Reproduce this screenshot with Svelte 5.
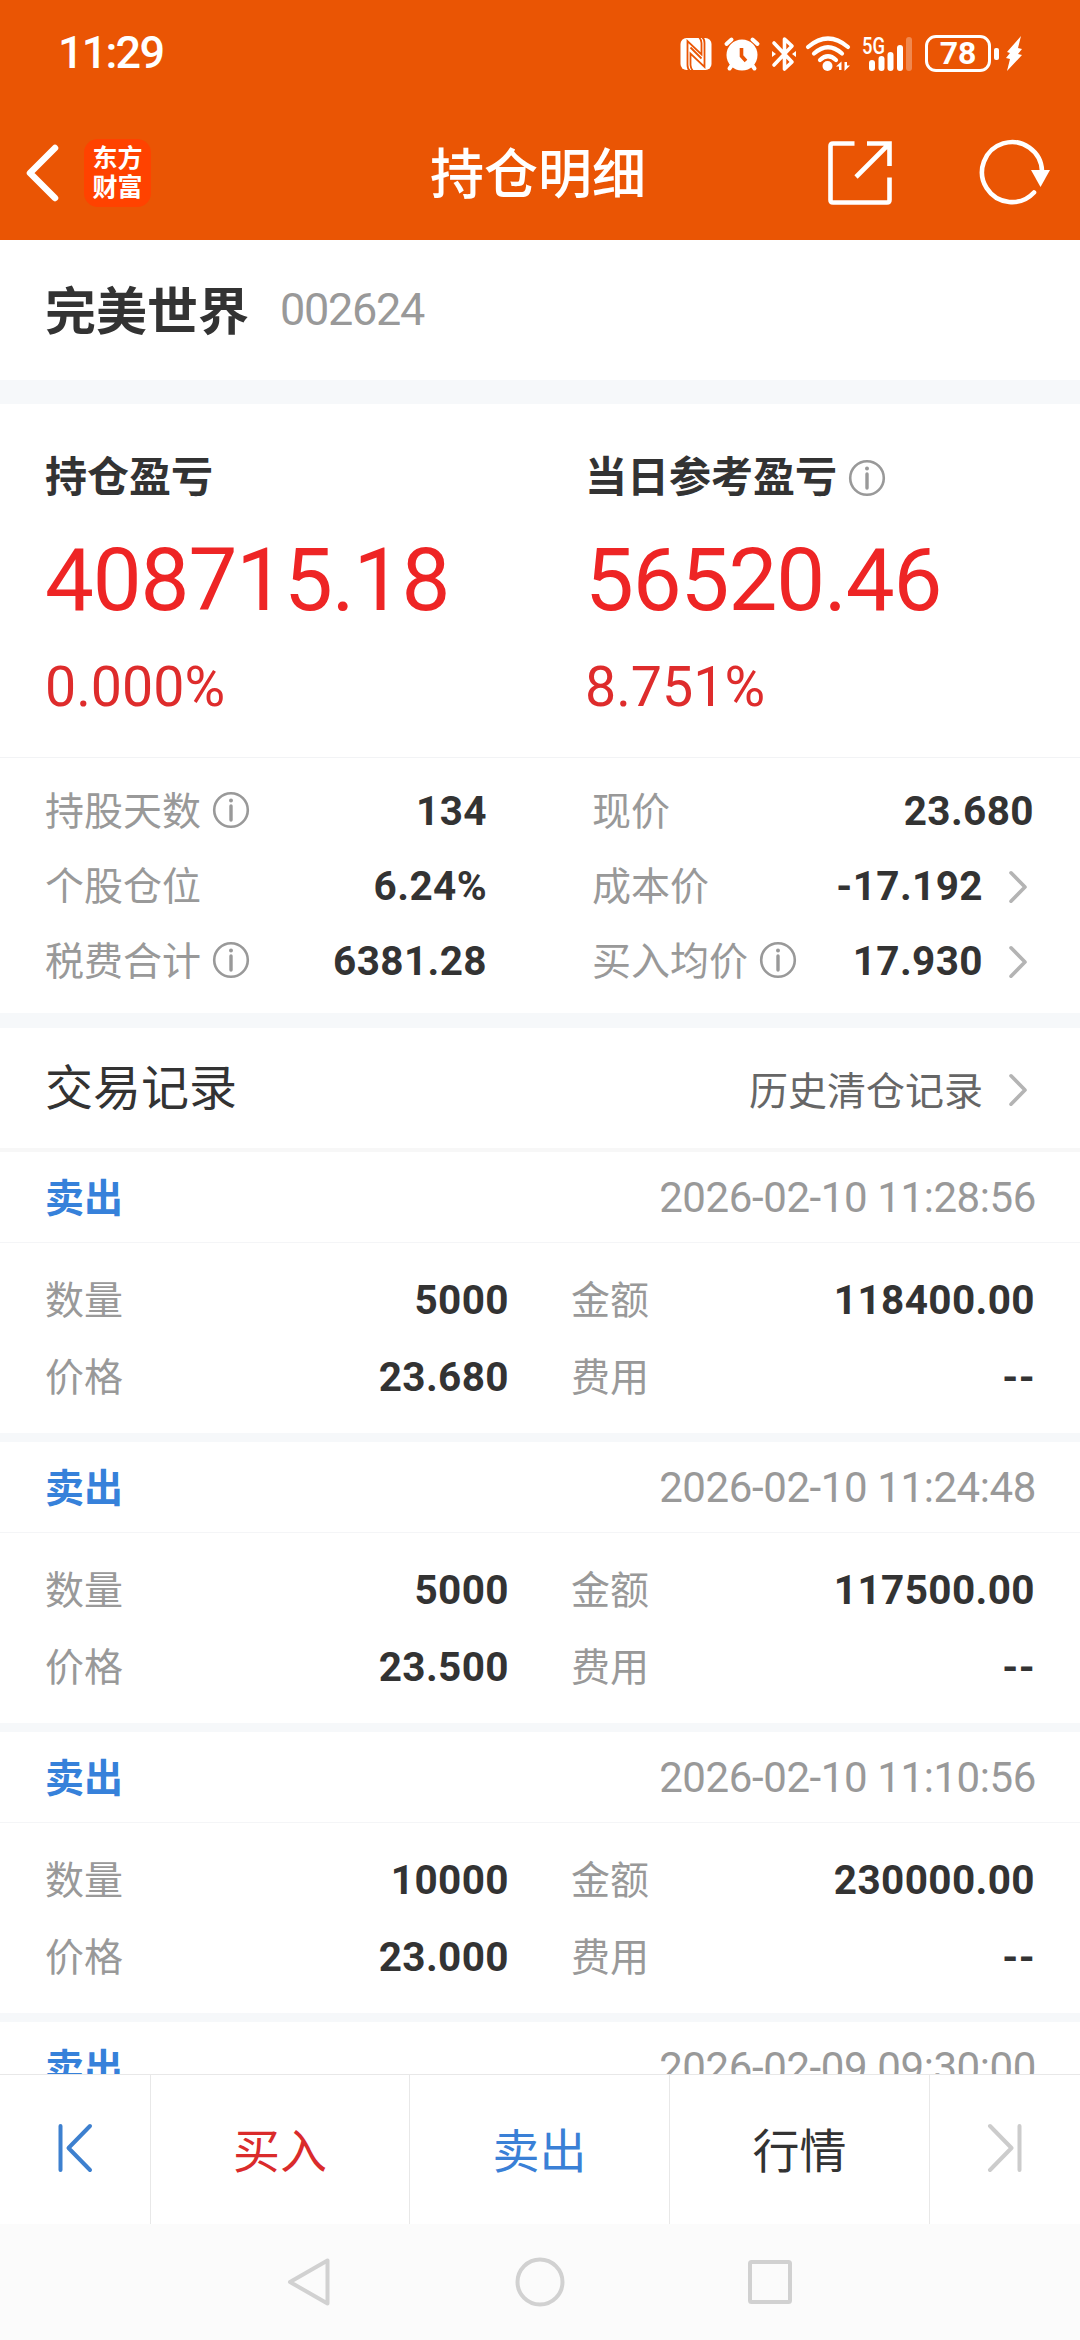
<!--
  Position detail screen
  Holding summary, trade records and the bottom trade bar
-->
<script lang="ts">
  interface Stat {
    label: string;
    value: string;
    info?: boolean;
    link?: boolean;
  }

  interface TradeRecord {
    time: string;
    details?: {
      quantity: string;
      amount: string;
      price: string;
      fee: string;
    };
  }

  const leftStats: Stat[] = [
    { label: '持股天数', value: '134', info: true },
    { label: '个股仓位', value: '6.24%' },
    { label: '税费合计', value: '6381.28', info: true },
  ];

  const rightStats: Stat[] = [
    { label: '现价', value: '23.680' },
    { label: '成本价', value: '-17.192', link: true },
    { label: '买入均价', value: '17.930', info: true, link: true },
  ];

  const records: TradeRecord[] = [
    {
      time: '2026-02-10 11:28:56',
      details: { quantity: '5000', amount: '118400.00', price: '23.680', fee: '--' },
    },
    {
      time: '2026-02-10 11:24:48',
      details: { quantity: '5000', amount: '117500.00', price: '23.500', fee: '--' },
    },
    {
      time: '2026-02-10 11:10:56',
      details: { quantity: '10000', amount: '230000.00', price: '23.000', fee: '--' },
    },
    { time: '2026-02-09 09:30:00' },
  ];
</script>

{#snippet infoIcon()}
  <svg class="info" width="38" height="38" viewBox="0 0 38 38" fill="none" stroke="#999" stroke-width="2.6">
    <circle cx="19" cy="19" r="16.8" />
    <path d="M19 15v14" stroke-width="3.4" stroke-linecap="round" />
    <circle cx="19" cy="9.6" r="2" fill="#999" stroke="none" />
  </svg>
{/snippet}

{#snippet chevron()}
  <svg class="chevron" width="20" height="34" viewBox="0 0 20 34" fill="none" stroke="#b4b4b4" stroke-width="3.6" stroke-linecap="round" stroke-linejoin="round">
    <path d="M3 2.8L17 17L3 31.2" />
  </svg>
{/snippet}

{#snippet statList(stats: Stat[])}
  {#each stats as stat}
    <div class="stat">
      <span class="label">{stat.label}</span>
      {#if stat.info}{@render infoIcon()}{/if}
      <span class="value">{stat.value}</span>
      {#if stat.link}{@render chevron()}{/if}
    </div>
  {/each}
{/snippet}

<div class="screen">
  <header>
    <div class="status-bar">
      <span class="clock">11:29</span>
      <div class="status-icons">
        <svg class="nfc" width="32" height="34" viewBox="0 0 32 34" fill="none" stroke="#ea5504" stroke-width="1.8">
          <rect x="0.5" y="1" width="31" height="32" rx="6" fill="#fff" stroke="none" />
          <path d="M10 34Q7.500 32 7.500 28V4L21.500 17.500V6Q21.500 3 19 0" />
          <path d="M22 0Q24.500 2 24.500 6V30L10.500 16.500V28Q10.500 31 13 34" />
          <path d="M10.500 10.500L21.500 21.500" />
        </svg>
        <svg class="alarm" width="36" height="35" viewBox="0 0 36 35" fill="none" stroke="#fff" stroke-width="4" stroke-linecap="round">
          <circle cx="18" cy="19" r="15.5" fill="#fff" stroke="none" />
          <path d="M2.500 8L7.500 3.500M33.500 8L28.500 3.500M8 29L5.500 32.500M28 29L30.500 32.500" />
          <path d="M17.500 12V20L22 25" stroke="#ea5504" stroke-width="3.6" stroke-linecap="butt" />
        </svg>
        <svg class="bluetooth" width="26" height="36" viewBox="0 0 26 36" fill="none" stroke="#fff" stroke-width="3.6" stroke-linecap="round" stroke-linejoin="round">
          <path d="M3 7L21 26L13.500 33V3L21 10L3 29" />
          <path d="M1 15L5 18L1 21ZM25 15L21 18L25 21Z" fill="#fff" stroke="none" />
        </svg>
        <svg class="wifi" width="46" height="36" viewBox="0 0 46 36" fill="none" stroke="#fff" stroke-width="4.2" stroke-linecap="round">
          <path d="M3 11Q23 -6 43 11M9 17.500Q23 5 37 17.500M15 24Q23 16.500 31 24" />
          <circle cx="22.500" cy="30" r="5" fill="#fff" stroke="none" />
          <path d="M31 30.500L36.500 25.500V34H34V30.500ZM45 29.500L39.500 35V26H42V29.500Z" fill="#fff" stroke="none" />
        </svg>
        <svg class="signal" width="52" height="36" viewBox="0 0 52 36" fill="#fff">
          <text x="0" y="18" class="network" textLength="23" lengthAdjust="spacingAndGlyphs">5G</text>
          <rect x="7" y="24" width="6" height="11" rx="3" />
          <rect x="16.500" y="20" width="6" height="15" rx="3" />
          <rect x="25.500" y="16" width="6" height="19" rx="3" />
          <rect x="35" y="9" width="6" height="26" rx="3" />
          <rect x="44" y="1" width="6" height="34" rx="3" opacity="0.3" />
        </svg>
        <div class="battery">78</div>
        <span class="battery-tip"></span>
        <svg class="bolt" width="18" height="38" viewBox="0 0 18 38" fill="#fff">
          <path d="M16 1L2 17L5 18L1 23L5 24L2 36L17 20L13 19L17 14L13 13Z" />
        </svg>
      </div>
    </div>

    <div class="title-bar">
      <div class="left">
        <svg width="36" height="60" viewBox="0 0 36 60" fill="none" stroke="#fff" stroke-width="6.500" stroke-linecap="round" stroke-linejoin="round">
          <path d="M31 5L6 30L31 55" />
        </svg>
        <div class="app-logo"><span>东方</span><span>财富</span></div>
      </div>
      <h1>持仓明细</h1>
      <div class="actions">
        <svg width="66" height="66" viewBox="0 0 66 66" fill="none" stroke="#fff" stroke-width="4.600">
          <path d="M27.500 3.500H6Q3.500 3.500 3.500 6V60Q3.500 62.500 6 62.500H60Q62.500 62.500 62.500 60V37.500" />
          <path d="M40 3.500H62.500V26M61.500 4.500L29 37" />
        </svg>
        <svg width="74" height="66" viewBox="0 0 74 66" fill="none" stroke="#fff" stroke-width="4.600" stroke-linecap="round">
          <path d="M64 31A30 30 0 1 0 56 52.500" />
          <path d="M53 30H72L62.500 47Z" fill="#fff" stroke="none" />
        </svg>
      </div>
    </div>
  </header>

  <section class="stock">
    <h2>完美世界</h2>
    <span class="code">002624</span>
  </section>

  <section class="profit">
    <div class="profit-item">
      <div class="caption">持仓盈亏</div>
      <div class="amount">408715.18</div>
      <div class="percent">0.000%</div>
    </div>
    <div class="profit-item">
      <div class="caption">当日参考盈亏{@render infoIcon()}</div>
      <div class="amount">56520.46</div>
      <div class="percent">8.751%</div>
    </div>
  </section>

  <section class="stats">
    <div class="stat-column">{@render statList(leftStats)}</div>
    <div class="stat-column">{@render statList(rightStats)}</div>
  </section>

  <section class="records-header">
    <h3>交易记录</h3>
    <div class="history">
      <span>历史清仓记录</span>
      {@render chevron()}
    </div>
  </section>

  <main>
    {#each records as record}
      <article>
        <div class="record-head">
          <span class="side">卖出</span>
          <span class="time">{record.time}</span>
        </div>
        {#if record.details}
          <div class="record-body">
            <span class="label">数量</span>
            <span class="value">{record.details.quantity}</span>
            <span class="label second">金额</span>
            <span class="value">{record.details.amount}</span>
            <span class="label">价格</span>
            <span class="value">{record.details.price}</span>
            <span class="label second">费用</span>
            <span class="value">{record.details.fee}</span>
          </div>
        {/if}
      </article>
    {/each}
  </main>

  <div class="trade-bar">
    <button aria-label="上一个">
      <svg width="36" height="50" viewBox="0 0 36 50" fill="none" stroke="#3d80cf" stroke-width="4" stroke-linecap="round" stroke-linejoin="round">
        <path d="M3.500 3V47M33 3L11.500 25L33 47" />
      </svg>
    </button>
    <button class="buy">买入</button>
    <button class="sell">卖出</button>
    <button>行情</button>
    <button aria-label="下一个">
      <svg width="36" height="50" viewBox="0 0 36 50" fill="none" stroke="#ccc" stroke-width="4" stroke-linecap="round" stroke-linejoin="round">
        <path d="M32.500 3V47M3 3L24.500 25L3 47" />
      </svg>
    </button>
  </div>

  <nav>
    <svg width="50" height="52" viewBox="0 0 50 52">
      <path d="M42.500 4.500V47.500L5 26Z" />
    </svg>
    <svg width="52" height="52" viewBox="0 0 52 52">
      <circle cx="26" cy="26" r="22.500" />
    </svg>
    <svg width="50" height="52" viewBox="0 0 50 52">
      <rect x="5" y="6" width="40" height="40" rx="1.500" />
    </svg>
  </nav>
</div>

<style>
  :global(body) {
    margin: 0;
    background: #fff;
  }

  .screen {
    display: flex;
    flex-direction: column;
    width: 1080px;
    height: 2340px;
    overflow: hidden;
    background: #fff;
    color: #333;
    font-family: Roboto, "Noto Sans CJK SC", sans-serif;
    line-height: 1.3;
  }

  svg {
    display: block;
    flex: none;
    overflow: visible;
  }

  h1,
  h2,
  h3 {
    margin: 0;
    font-weight: 400;
  }

  header {
    height: 240px;
    background: #ea5504;
    color: #fff;
  }

  .status-bar {
    display: flex;
    justify-content: space-between;
    align-items: center;
    height: 107px;
    padding: 0 57px 0 58px;
  }

  .clock {
    font-size: 45px;
    font-weight: 500;
    letter-spacing: -1.8px;
  }

  .status-icons {
    display: flex;
    align-items: center;
  }

  .alarm {
    margin-left: 12px;
  }

  .bluetooth {
    margin-left: 11px;
  }

  .wifi {
    margin-left: 8px;
  }

  .signal {
    margin-left: 11px;
  }

  .network {
    font-size: 24px;
    font-weight: 500;
  }

  .battery {
    box-sizing: border-box;
    width: 66px;
    height: 37px;
    margin-left: 11px;
    border: 3px solid #fff;
    border-radius: 11px;
    font-size: 32px;
    font-weight: 700;
    line-height: 31px;
    text-align: center;
  }

  .battery-tip {
    width: 5px;
    height: 12px;
    margin-left: 3px;
    border-radius: 2px;
    background: #fff;
  }

  .bolt {
    margin-left: 6px;
  }

  .title-bar {
    display: grid;
    grid-template-columns: 1fr auto 1fr;
    align-items: center;
    height: 131px;
    padding: 0 28px 0 24px;
  }

  .left {
    display: flex;
    align-items: center;
  }

  .app-logo {
    display: flex;
    flex-direction: column;
    justify-content: center;
    align-items: center;
    width: 67px;
    height: 68px;
    margin-left: 24px;
    border-radius: 14px;
    background: #ff4200;
    font-size: 25px;
    font-weight: 700;
    line-height: 29px;
  }

  h1 {
    padding-top: 7px;
    font-size: 54px;
    font-weight: 500;
    line-height: 66px;
  }

  .actions {
    display: flex;
    justify-content: flex-end;
    gap: 85px;
  }

  .stock {
    display: flex;
    align-items: center;
    height: 140px;
    padding-left: 45px;
    border-bottom: 24px solid #f6f8fa;
  }

  h2 {
    padding-top: 5px;
    font-size: 51px;
    font-weight: 700;
    line-height: 60px;
  }

  .code {
    margin-left: 31px;
    color: #999;
    font-size: 45px;
    letter-spacing: -1.3px;
  }

  .profit {
    display: grid;
    grid-template-columns: 540px 540px;
    height: 353px;
    border-bottom: 1px solid #f2f3f5;
  }

  .profit-item {
    padding: 49px 0 0 45px;
  }

  .caption {
    display: flex;
    align-items: center;
    height: 50px;
    font-size: 42px;
    font-weight: 700;
  }

  .info {
    margin-left: 11px;
  }

  .amount {
    margin-top: 27px;
    color: #ee2525;
    font-size: 87px;
    line-height: 100px;
    letter-spacing: -1.1px;
  }

  .percent {
    margin-top: 25px;
    color: #de2c2c;
    font-size: 55.5px;
    line-height: 66px;
  }

  .stats {
    display: grid;
    grid-template-columns: 442px 442px;
    column-gap: 105px;
    height: 239px;
    padding: 16px 0 0 45px;
    border-bottom: 15px solid #f6f8fa;
  }

  .stat {
    display: flex;
    align-items: center;
    height: 75px;
  }

  .stat .info {
    margin-bottom: 3px;
  }

  .label {
    padding-top: 1px;
    color: #999;
    font-size: 39px;
  }

  .value {
    margin-left: auto;
    font-size: 40.5px;
    font-weight: 700;
    letter-spacing: 0.4px;
  }

  .chevron {
    margin: 0 6px 0 25px;
  }

  .records-header {
    display: flex;
    justify-content: space-between;
    align-items: center;
    height: 120px;
    padding: 0 46px 0 45px;
    border-bottom: 4px solid #f7f7f7;
  }

  h3 {
    padding-top: 2px;
    font-size: 48px;
  }

  .history {
    display: flex;
    align-items: center;
    padding-top: 4px;
    color: #666;
    font-size: 39px;
  }

  .history span {
    padding-top: 4px;
  }

  main {
    flex: 1;
    min-height: 0;
    overflow: hidden;
  }

  article {
    height: 281px;
    border-bottom: 9px solid #f6f8fa;
  }

  .record-head {
    display: flex;
    justify-content: space-between;
    align-items: center;
    height: 90px;
    padding: 0 44px 0 45px;
    border-bottom: 1px solid #f4f5f7;
  }

  .side {
    padding-top: 4px;
    color: #3681da;
    font-size: 39px;
    font-weight: 700;
  }

  .time {
    padding-top: 2px;
    color: #999;
    font-size: 42px;
    letter-spacing: -0.4px;
  }

  .record-body {
    display: grid;
    grid-template-columns: 100px 364px 163px 363px;
    grid-auto-rows: 77px;
    align-items: center;
    padding: 19px 45px 0;
  }

  .record-body .value {
    text-align: right;
  }

  .second {
    padding-left: 62px;
  }

  .trade-bar {
    display: grid;
    grid-template-columns: 151px 259px 260px 260px 150px;
    height: 149px;
    border-top: 1px solid #e8e8e8;
  }

  .trade-bar button {
    display: flex;
    justify-content: center;
    align-items: center;
    padding: 4px 0 0;
    border: none;
    border-right: 1px solid #e8e8e8;
    background: none;
    color: #333;
    font-family: inherit;
    font-size: 47px;
    line-height: 60px;
  }

  .trade-bar button:first-child,
  .trade-bar button:last-child {
    padding: 0 0 4px;
  }

  .trade-bar button:last-child {
    border-right: none;
  }

  .trade-bar .buy {
    color: #da2b2b;
  }

  .trade-bar .sell {
    color: #3a80d6;
  }

  nav {
    display: flex;
    justify-content: center;
    align-items: center;
    gap: 179px;
    height: 116px;
    background: #fbfbfb;
  }

  nav svg {
    fill: none;
    stroke: #d1d1d1;
    stroke-width: 4;
    stroke-linejoin: round;
  }
</style>
